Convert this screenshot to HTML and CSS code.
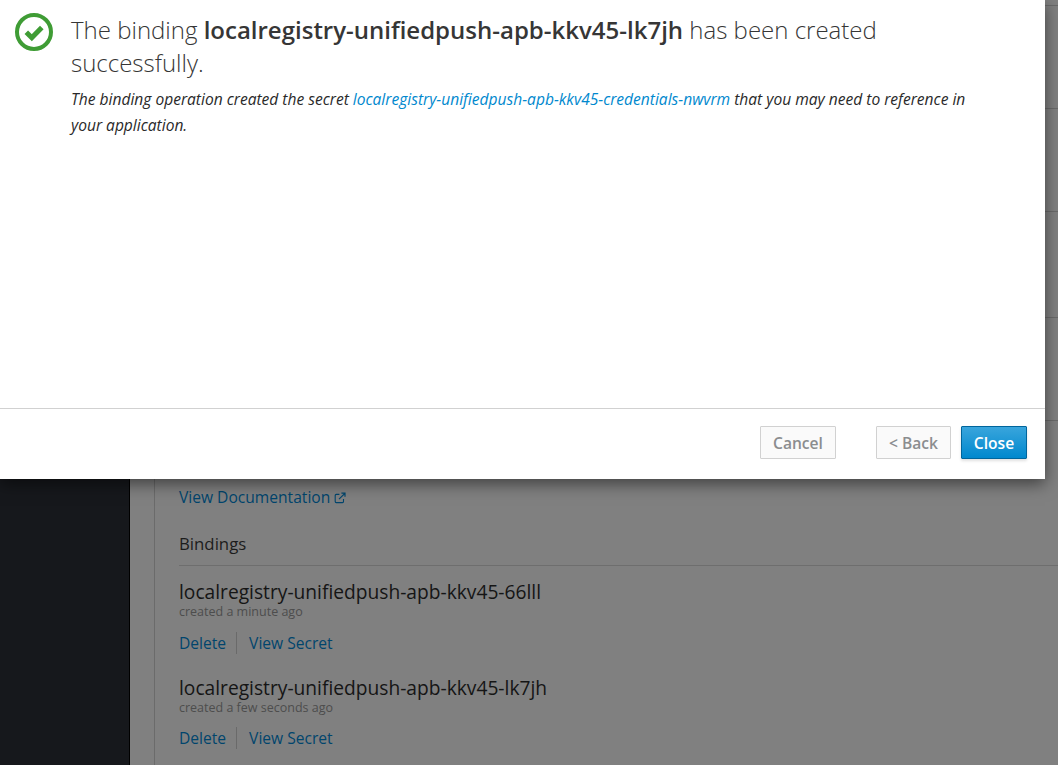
FILE: index.html
```html
<!DOCTYPE html>
<html lang="en">
<head>
<meta charset="utf-8">
<title>Binding created</title>
<link rel="stylesheet" href="styles.css">
</head>
<body>
<div class="page">
  <aside class="sidebar"></aside>
  <main class="main">
    <div class="details">
      <div class="rows">
        <div class="row row-a"></div>
        <div class="row row-b"></div>
        <div class="row row-b"></div>
        <div class="row row-c"></div>
        <div class="row row-b"></div>
      </div>
      <a class="doc-link" href="#">View Documentation <svg class="ext" viewBox="0 0 12 12" width="12" height="12" aria-hidden="true"><path d="M9.5 7v2.6a1 1 0 0 1-1 1H2.2a1 1 0 0 1-1-1V3.4a1 1 0 0 1 1-1h3.2" fill="none" stroke="currentColor" stroke-width="1.1"/><path d="M5 7.2 10.4 1.8M7.4 1.2h3.6v3.6" fill="none" stroke="currentColor" stroke-width="1.2"/></svg></a>
      <h2 class="bindings-head">Bindings</h2>
      <section class="binding">
        <div class="binding-name">localregistry-unifiedpush-apb-kkv45-66lll</div>
        <div class="binding-age">created a minute ago</div>
        <div class="actions"><a href="#">Delete</a><a href="#">View Secret</a></div>
      </section>
      <section class="binding binding-second">
        <div class="binding-name">localregistry-unifiedpush-apb-kkv45-lk7jh</div>
        <div class="binding-age">created a few seconds ago</div>
        <div class="actions"><a href="#">Delete</a><a href="#">View Secret</a></div>
      </section>
    </div>
  </main>
</div>
<div class="modal">
  <div class="modal-body">
    <svg class="status-icon" viewBox="0 0 40 40" width="40" height="40" aria-hidden="true">
      <circle cx="20" cy="20" r="17" fill="none" stroke="#3f9c35" stroke-width="4"/>
      <path d="M12.3 20.3 17.8 25.8 27.8 15.4" fill="none" stroke="#3f9c35" stroke-width="5"/>
    </svg>
    <div class="message">
      <h1 class="title">The binding <strong>localregistry-unifiedpush-apb-kkv45-lk7jh</strong> has been created successfully.</h1>
      <p class="note">The binding operation created the secret <a href="#">localregistry-unifiedpush-apb-kkv45-credentials-nwvrm</a> that you may need to reference in your application.</p>
    </div>
  </div>
  <div class="modal-footer">
    <button class="btn btn-disabled btn-cancel">Cancel</button>
    <button class="btn btn-disabled btn-back">&lt; Back</button>
    <button class="btn btn-primary">Close</button>
  </div>
</div>
</body>
</html>
```
FILE: styles.css
```css
* { box-sizing: border-box; }
html, body { margin: 0; height: 100%; overflow: hidden; }
body {
  font-family: "Open Sans", "Liberation Sans", sans-serif;
  background: #808080;
  color: #1a1a1a;
}
.page { display: flex; height: 765px; }
.sidebar { width: 130px; background: #16181c; border-right: 1px solid #000; flex: none; }
.main { flex: 1; padding-left: 24px; min-width: 0; }
.details { height: 100%; border-left: 1px solid #6b6b6b; padding-left: 24px; }
.rows { margin-left: -24px; }
.row { border-bottom: 1px solid #6a6a6a; }
.row-a { height: 6px; }
.row-b { height: 103px; }
.row-c { height: 106px; }
.doc-link {
  display: inline-block; margin-top: 65px; font-size: 15.6px; line-height: 22px;
  color: #00456d; text-decoration: none;
}
.ext { vertical-align: -1px; }
.bindings-head {
  margin: 25px 0 0; padding-bottom: 10px; font-size: 16.8px; line-height: 22px; font-weight: 400;
  border-bottom: 1px solid #6e6e6e; color: #1c1c1c;
}
.binding { padding-top: 14px; }
.binding-second { padding-top: 22px; }
.binding-name { font-size: 19.2px; line-height: 24px; color: #151515; }
.binding-age { font-size: 12.5px; line-height: 16px; color: #4d4d4d; }
.actions { display: flex; margin-top: 12px; font-size: 15.6px; line-height: 22px; }
.binding-second .actions { margin-top: 11px; }
.actions a { color: #00456d; text-decoration: none; }
.actions a:first-child { padding-right: 10px; border-right: 1px solid #6a6a6a; margin-right: 12px; }

.modal {
  position: absolute; left: 0; top: 0; width: 1045px; height: 479px;
  background: #fff; box-shadow: 0 5px 15px rgba(0,0,0,.5);
  display: flex; flex-direction: column;
}
.modal-body { flex: 1; display: flex; padding: 12px 60px 0 15px; gap: 17px; min-height: 0; }
.status-icon { flex: none; margin-left: -1px; }
.message { flex: 1; min-width: 0; padding-top: 1px; }
.title { margin: 0; font-size: 24px; line-height: 33px; font-weight: 300; color: #363636; }
.title strong { font-weight: 600; }
.note { margin: 7px 0 0; font-size: 15.57px; line-height: 26.4px; font-style: italic; color: #292929; }
.note a { color: #0088ce; text-decoration: none; }
.modal-footer {
  flex: none; height: 71px; border-top: 1px solid #d1d1d1;
  display: flex; justify-content: flex-end; align-items: flex-start;
  padding: 17px 18px 0 0;
}
.btn {
  height: 33px; font: 600 15.6px/1 "Open Sans", "Liberation Sans", sans-serif;
  padding: 2px 0 0; border-radius: 1px; border: 1px solid #d1d1d1;
}
.btn-disabled { background: #fafafa; color: #8b8d8f; }
.btn-cancel { width: 76px; margin-right: 40px; }
.btn-back { width: 75px; margin-right: 10px; }
.btn-primary {
  width: 66px; color: #fff; border-color: #00659c;
  background: linear-gradient(#39a5dc, #0088ce);
  box-shadow: 0 2px 3px rgba(0,0,0,.12);
}
```
